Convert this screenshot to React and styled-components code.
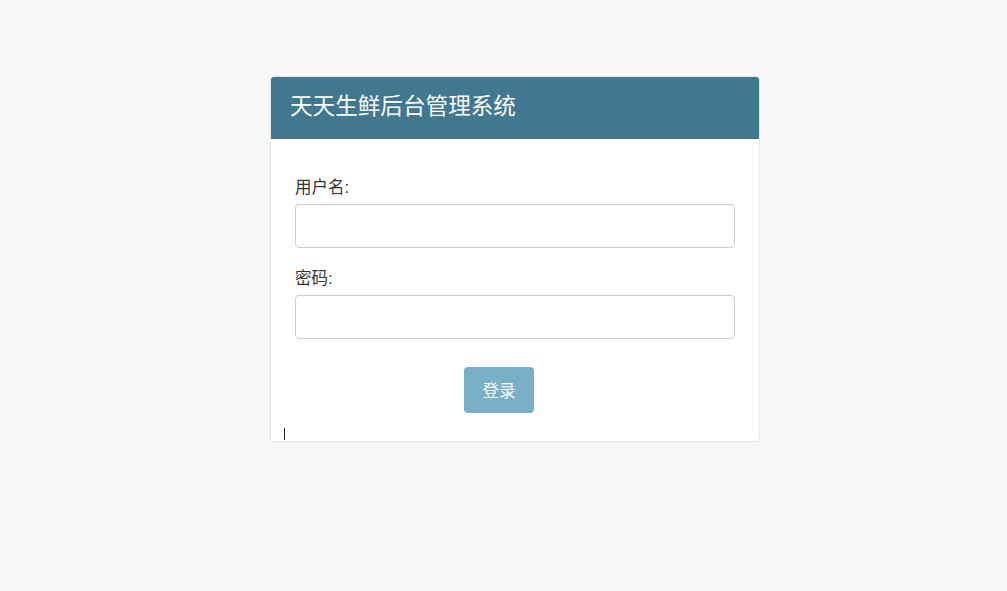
import React from "react";
import styled, { createGlobalStyle } from "styled-components";

const GlobalStyle = createGlobalStyle`
  html, body {
    margin: 0;
    padding: 0;
    background: #f8f8f8;
    font-family: "Liberation Sans", "Noto Sans CJK SC", sans-serif;
    color: #333;
  }
`;

const Page = styled.div`
  display: flex;
  justify-content: center;
  align-items: flex-start;
  padding: 76px 0 0 23px;
  min-height: 591px;
  box-sizing: border-box;
`;

const Panel = styled.div`
  width: 490px;
  background: #fff;
  border: 1px solid #e6e6e6;
  border-radius: 4px;
  box-sizing: border-box;
  overflow: hidden;
`;

const Heading = styled.div`
  height: 63px;
  margin: -1px -1px 0;
  background: #41788f;
  border-radius: 4px 4px 0 0;
  display: flex;
  align-items: center;
  padding: 0 20px;
`;

const Title = styled.h3`
  margin: 0;
  font-size: 22.6px;
  font-weight: normal;
  color: #fff;
  line-height: 1;
`;

const Form = styled.form`
  display: flex;
  flex-direction: column;
  padding: 36px 24px 0;
`;

const Field = styled.div`
  display: flex;
  flex-direction: column;
  gap: 5px;
  margin-bottom: ${(p) => p.gap}px;
`;

const Label = styled.label`
  font-size: 16.5px;
  line-height: 24px;
  color: #333;
`;

const Input = styled.input`
  height: 44px;
  box-sizing: border-box;
  border: 1px solid #ccc;
  border-radius: 4px;
  padding: 6px 12px;
  font-size: 16px;
  outline: none;
`;

const Actions = styled.div`
  display: flex;
  justify-content: center;
  padding-right: 32px;
`;

const Button = styled.button`
  width: 70px;
  height: 46px;
  border: none;
  border-radius: 4px;
  background: #7aafc8;
  color: #fff;
  font-family: inherit;
  font-size: 16.5px;
  cursor: pointer;
`;

const CaretRow = styled.div`
  height: 28px;
  display: flex;
  align-items: flex-end;
  padding-left: 13px;
`;

const Caret = styled.span`
  width: 1px;
  height: 12px;
  background: #222;
  margin-bottom: 1px;
`;

export default function App() {
  return (
    <>
      <GlobalStyle />
      <Page>
        <Panel>
          <Heading>
            <Title>天天生鲜后台管理系统</Title>
          </Heading>
          <Form onSubmit={(e) => e.preventDefault()}>
            <Field gap={18}>
              <Label>用户名:</Label>
              <Input type="text" />
            </Field>
            <Field gap={28}>
              <Label>密码:</Label>
              <Input type="password" />
            </Field>
            <Actions>
              <Button type="submit">登录</Button>
            </Actions>
          </Form>
          <CaretRow>
            <Caret />
          </CaretRow>
        </Panel>
      </Page>
    </>
  );
}
